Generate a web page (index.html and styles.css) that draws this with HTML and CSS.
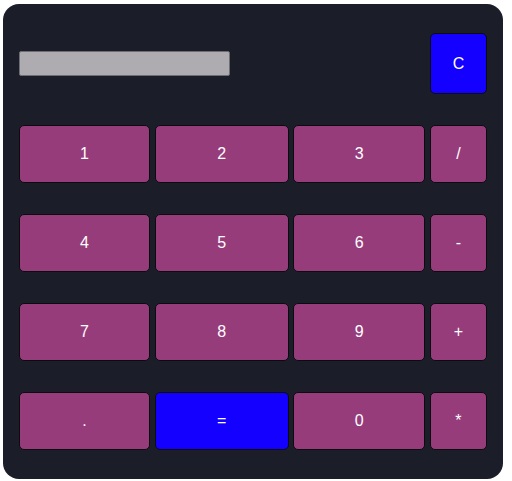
FILE: index.html
```html
<!DOCTYPE html>
<html>
<head>
<meta charset="utf-8">
<link rel="stylesheet" href="styles.css">
</head>
<body>
<div class="calc">
  <div class="display"></div>
  <button class="key key-blue">C</button>
  <button class="key">1</button>
  <button class="key">2</button>
  <button class="key">3</button>
  <button class="key">/</button>
  <button class="key">4</button>
  <button class="key">5</button>
  <button class="key">6</button>
  <button class="key">-</button>
  <button class="key">7</button>
  <button class="key">8</button>
  <button class="key">9</button>
  <button class="key">+</button>
  <button class="key">.</button>
  <button class="key key-blue">=</button>
  <button class="key">0</button>
  <button class="key">*</button>
</div>
</body>
</html>
```
FILE: styles.css
```css
html, body {
  margin: 0;
  padding: 0;
  background: #ffffff;
}
body {
  padding: 4px 0 0 3px;
}
.calc {
  box-sizing: border-box;
  width: 500px;
  height: 475px;
  background: #1b1d29;
  border-radius: 16px;
  padding: 29px 16px 0 16px;
  display: grid;
  grid-template-columns: 131px 134px 132px 57px;
  grid-template-rows: 61px 58px 58px 58px 58px;
  column-gap: 4.67px;
  row-gap: 31px;
}
.display {
  grid-column: 1 / 4;
  align-self: center;
  justify-self: start;
  box-sizing: border-box;
  width: 211px;
  height: 25px;
  background: #aeacb0;
  border: 1px solid #6f6d74;
  border-radius: 2px;
}
.key {
  box-sizing: border-box;
  margin: 0;
  padding: 0;
  background: #973c7a;
  border: 1px solid #0b0b10;
  border-radius: 5px;
  color: #ffffff;
  font-family: "Liberation Sans", Arial, sans-serif;
  font-size: 16px;
}
.key-blue {
  background: #1400ff;
}
```
